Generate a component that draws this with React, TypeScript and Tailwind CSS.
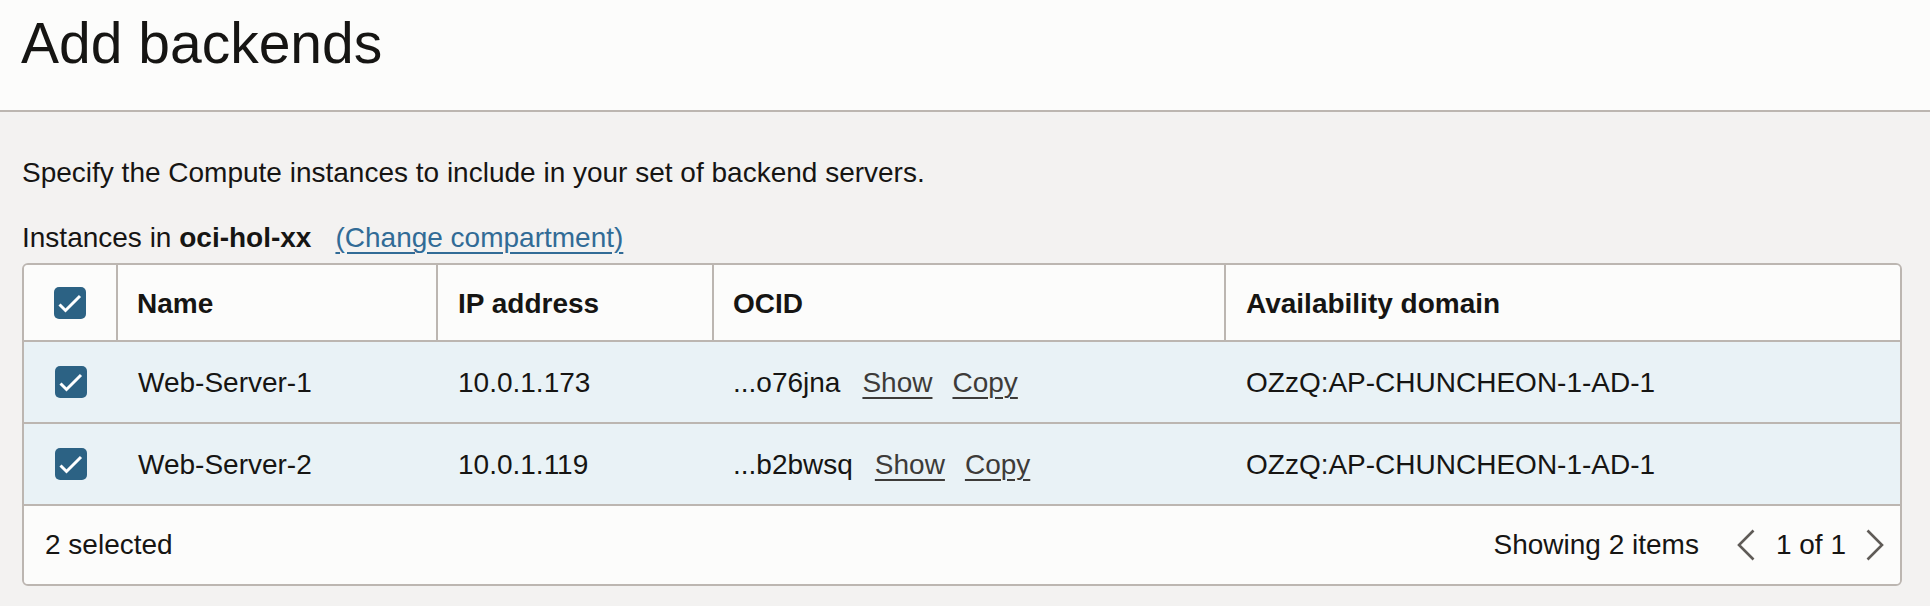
type Instance = {
  name: string;
  ip: string;
  ocid: string;
  ad: string;
};

const instances: Instance[] = [
  { name: "Web-Server-1", ip: "10.0.1.173", ocid: "...o76jna", ad: "OZzQ:AP-CHUNCHEON-1-AD-1" },
  { name: "Web-Server-2", ip: "10.0.1.119", ocid: "...b2bwsq", ad: "OZzQ:AP-CHUNCHEON-1-AD-1" },
];

const cols = "grid grid-cols-[94px_320px_276px_512px_1fr]";

function Checkbox() {
  return (
    <div className="w-[32px] h-[32px] rounded-[5px] bg-[#2c6284] flex items-center justify-center">
      <svg viewBox="0 0 32 32" className="w-[32px] h-[32px]">
        <path d="M5.5 17.5 L11.5 23.5 L26 9" fill="none" stroke="white" strokeWidth="3" />
      </svg>
    </div>
  );
}

function Pager() {
  return (
    <div className="flex items-center text-[#161513]">
      <span>Showing 2 items</span>
      <svg viewBox="0 0 18 32" className="w-[18px] h-[32px] ml-[38px]">
        <polyline points="16.5,1.5 2,16 16.5,30.5" fill="none" stroke="#5f5b57" strokeWidth="2.6" />
      </svg>
      <span className="ml-[21px]">1 of 1</span>
      <svg viewBox="0 0 18 32" className="w-[18px] h-[32px] ml-[20px]">
        <polyline points="1.5,1.5 16,16 1.5,30.5" fill="none" stroke="#5f5b57" strokeWidth="2.6" />
      </svg>
    </div>
  );
}

export default function App() {
  return (
    <div className="min-h-[606px] bg-[#f3f2f1] font-['Liberation_Sans',Arial,sans-serif] text-[#161513]">
      {/* Header */}
      <div className="h-[112px] bg-[#fcfcfb] border-b-2 border-[#bcb6b1] pl-[21px] pt-[11px]">
        <h1 className="text-[57px] leading-[64px] font-normal">Add backends</h1>
      </div>

      {/* Body */}
      <div className="pt-[45px] pb-[20px] text-[28px] leading-[32px]">
        <p className="pl-[22px]">Specify the Compute instances to include in your set of backend servers.</p>
        <p className="pl-[22px] mt-[33px]">
          Instances in <span className="font-bold">oci-hol-xx</span>
          <a className="ml-[24px] text-[#316b96] underline underline-offset-[5px] decoration-2 cursor-pointer">
            (Change compartment)
          </a>
        </p>

        {/* Table */}
        <div className="ml-[22px] mr-[28px] mt-[9px] border-2 border-[#bcb6b1] rounded-[6px] overflow-hidden">
          <div className={`${cols} h-[77px] bg-[#fcfcfb] border-b-2 border-[#bcb6b1] font-bold`}>
            <div className="border-r-2 border-[#bcb6b1] flex items-center justify-center">
              <Checkbox />
            </div>
            <div className="border-r-2 border-[#bcb6b1] flex items-center pl-[19px] pt-[2px]">Name</div>
            <div className="border-r-2 border-[#bcb6b1] flex items-center pl-[20px] pt-[2px]">IP address</div>
            <div className="border-r-2 border-[#bcb6b1] flex items-center pl-[19px] pt-[2px]">OCID</div>
            <div className="flex items-center pl-[20px] pt-[2px]">Availability domain</div>
          </div>

          {instances.map((inst) => (
            <div key={inst.name} className={`${cols} h-[82px] bg-[#e9f2f6] border-b-2 border-[#bcb6b1]`}>
              <div className="flex items-center justify-center">
                <Checkbox />
              </div>
              <div className="flex items-center pl-[20px] pt-[2px]">{inst.name}</div>
              <div className="flex items-center pl-[20px] pt-[2px]">{inst.ip}</div>
              <div className="flex items-center pl-[19px] pt-[2px] gap-[20px]">
                <span className="mr-[2px]">{inst.ocid}</span>
                <a className="text-[#3d3b39] underline underline-offset-[5px] decoration-2 cursor-pointer">Show</a>
                <a className="text-[#3d3b39] underline underline-offset-[5px] decoration-2 cursor-pointer">Copy</a>
              </div>
              <div className="flex items-center pl-[20px] pt-[2px]">{inst.ad}</div>
            </div>
          ))}

          <div className="h-[78px] bg-[#fcfcfb] flex items-center justify-between pl-[21px] pr-[16px]">
            <span>2 selected</span>
            <Pager />
          </div>
        </div>
      </div>
    </div>
  );
}
